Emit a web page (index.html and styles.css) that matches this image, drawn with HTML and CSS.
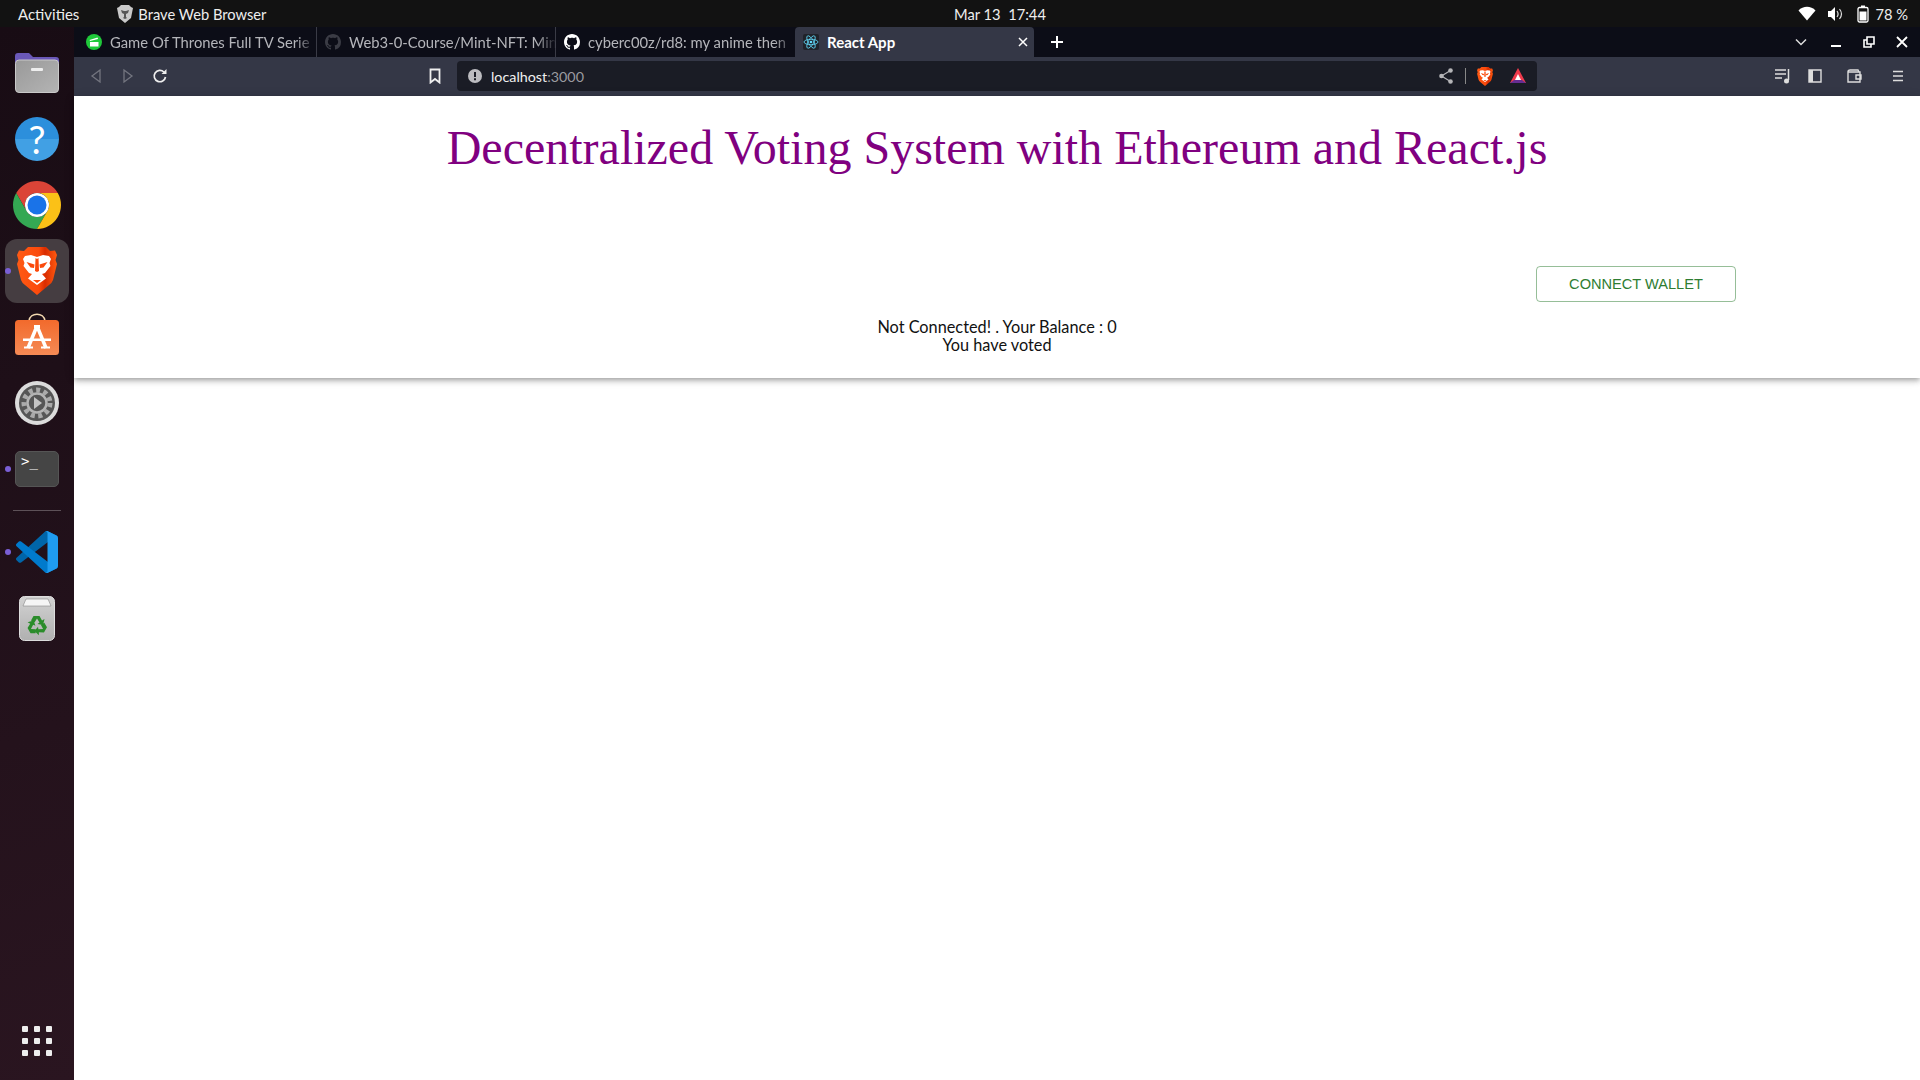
FILE: index.html
```html
<!DOCTYPE html>
<html lang="en">

<head>
    <meta charset="UTF-8">
    <title>React App</title>
    <link rel="stylesheet" href="styles.css">
</head>

<body>
    <svg class="defs" width="0" height="0">
        <defs>
            <linearGradient id="brave-fill" x1="0" x2="1" y1="0" y2="0">
                <stop offset="0" stop-color="#ff5a14" />
                <stop offset=".55" stop-color="#fb4a0c" />
                <stop offset=".7" stop-color="#d92c00" />
                <stop offset="1" stop-color="#ff5a10" />
            </linearGradient>
            <linearGradient id="folder-fill" x1="0" x2="1" y1="0" y2="1">
                <stop offset="0" stop-color="#999" />
                <stop offset="1" stop-color="#b4b4b4" />
            </linearGradient>
            <linearGradient id="bag-fill" x1="0" x2="0" y1="0" y2="1">
                <stop offset="0" stop-color="#f26a2c" />
                <stop offset="1" stop-color="#f58a55" />
            </linearGradient>
            <linearGradient id="trash-fill" x1="0" x2="0" y1="0" y2="1">
                <stop offset="0" stop-color="#d2d2d2" />
                <stop offset="1" stop-color="#b0b0b0" />
            </linearGradient>
            <symbol id="brave" viewBox="0 0 40 48">
                <path fill="url(#brave-fill)" d="M11 0H29L33 4 38 3.500 40 8 38.500 13 40 17 36 33Q35 36 32 38L20 48 8 38Q5 36 4 33L0 17 1.500 13 0 8 2 3.500 7 4Z" />
                <path fill="#fff" d="M8 9L14 8 20 10 26 8 32 9 34 12 32.500 16 33.500 19 28 26 25 27 29 31.500 20 38 11 31.500 15 27 12 26 6.500 19 7.500 16 6 12Z" />
                <path fill="#fb4a0c" d="M9.500 15L17.500 17.500 17 21 13.500 20.500ZM30.500 15L22.500 17.500 23 21 26.500 20.500ZM18.500 11L20 12 21.500 11 22 24 20 25 18 24ZM16 33H24L20 36Z" />
            </symbol>
            <symbol id="github" viewBox="0 0 16 16">
                <path fill="currentColor" d="M8 0C3.580 0 0 3.580 0 8c0 3.540 2.290 6.530 5.470 7.590.4.07.55-.17.55-.38 0-.19-.01-.82-.01-1.490-2.010.37-2.530-.49-2.690-.94-.09-.23-.48-.94-.82-1.130-.28-.15-.68-.52-.01-.53.63-.01 1.080.58 1.230.82.72 1.210 1.870.87 2.330.66.07-.52.28-.87.51-1.070-1.780-.2-3.640-.89-3.640-3.950 0-.87.31-1.590.82-2.150-.08-.2-.36-1.020.08-2.120 0 0 .67-.21 2.200.82.64-.18 1.320-.27 2-.27.68 0 1.360.09 2 .27 1.530-1.040 2.200-.82 2.200-.82.44 1.100.16 1.920.08 2.120.51.56.82 1.270.82 2.150 0 3.070-1.870 3.750-3.650 3.950.29.25.54.73.54 1.480 0 1.070-.01 1.930-.01 2.200 0 .21.15.46.55.38A8.013 8.013 0 0016 8c0-4.420-3.580-8-8-8z" />
            </symbol>
        </defs>
    </svg>

    <!-- barra do sistema -->
    <div class="topbar">
        <div class="topbar-left">
            <span class="activities">Activities</span>
            <span class="app-name">
                <svg width="16" height="18" viewBox="0 0 16 18"><path fill="#c9c9c9" d="M4 0h8l2 2 2 1-1 5-1 5-6 5-6-5-1-5-1-5 2-1z" /><path fill="#555" d="M4 5l3 1h2l3-1-1 3-2 1v3l1 1-2 1-2-1 1-1V9L5 8z" /></svg>
                Brave Web Browser
            </span>
        </div>
        <div class="clock">Mar 13&nbsp; 17:44</div>
        <div class="topbar-right">
            <svg width="18" height="16" viewBox="0 0 18 16"><path fill="#fff" d="M9 14.500L.5 4.500C5-.5 13-.5 17.500 4.500z" /></svg>
            <svg class="tray-volume" width="16" height="16" viewBox="0 0 16 16"><path fill="#fff" d="M1 5h3l4-4v14l-4-4H1z" /><path fill="none" stroke="#ddd" stroke-width="1.200" d="M10 5c1.300 1.800 1.300 4.200 0 6M12.500 3c2.400 3 2.400 7 0 10" /></svg>
            <svg class="tray-battery" width="12" height="18" viewBox="0 0 12 18"><path fill="none" stroke="#fff" stroke-width="1.300" d="M2.500 2.500h7a1.500 1.500 0 011.500 1.500v11.500a1.500 1.500 0 01-1.500 1.500h-7A1.500 1.500 0 011 15.500V4a1.500 1.500 0 011.500-1.500z" /><path fill="#fff" d="M4 .5h4v2H4zM2.500 6.500h7v9h-7z" /></svg>
            <span class="battery">78 %</span>
        </div>
    </div>

    <div class="desktop">
        <!-- dock lateral -->
        <aside class="dock">
            <div class="dock-item">
                <svg width="44" height="40" viewBox="0 0 44 40">
                    <path fill="#6a58b8" d="M3 0h11l4 4h23a3 3 0 013 3v10H0V3a3 3 0 013-3z" />
                    <rect x=".5" y="7" width="43" height="32.500" rx="3.500" fill="url(#folder-fill)" stroke="#c9c9c9" />
                    <rect x="16" y="15" width="12" height="3" rx="1" fill="#eee" />
                </svg>
            </div>
            <div class="dock-item">
                <div class="help-icon">?</div>
            </div>
            <div class="dock-item">
                <svg width="48" height="48" viewBox="0 0 48 48">
                    <path fill="#db4437" d="M44.780 12A24 24 0 003.220 12L13.600 30A12 12 0 0124 12z" />
                    <path fill="#34a853" d="M3.220 12A24 24 0 0024 48L34.400 30A12 12 0 0113.600 30z" />
                    <path fill="#fbc117" d="M24 48A24 24 0 0044.780 12H24A12 12 0 0134.400 30z" />
                    <circle cx="24" cy="24" r="12" fill="#fff" />
                    <circle cx="24" cy="24" r="9.500" fill="#1a73e8" />
                </svg>
            </div>
            <div class="dock-item is-active">
                <span class="dot"></span>
                <div class="dock-highlight">
                    <svg width="40" height="48"><use href="#brave" /></svg>
                </div>
            </div>
            <div class="dock-item">
                <svg class="bag-icon" width="44" height="42" viewBox="0 0 44 42">
                    <path fill="none" stroke="#f3d9b0" stroke-width="1.600" d="M14 8c1-9 15-9 16 0" />
                    <rect y="7" width="44" height="35" rx="3.500" fill="url(#bag-fill)" />
                    <path fill="none" stroke="#fff" stroke-width="3.500" d="M22 13L13 35M22 13l9 22" />
                    <path fill="#fff" d="M19 12h6v3h-6zM8 25.500h28v2.500H8zM9 33.500h9v2H9zM26 33.500h9v2h-9z" />
                </svg>
            </div>
            <div class="dock-item">
                <svg width="44" height="44" viewBox="0 0 44 44">
                    <circle cx="22" cy="22" r="22" fill="#dcdcdc" />
                    <circle cx="22" cy="22" r="18" fill="#565656" />
                    <circle cx="22" cy="22" r="13" fill="none" stroke="#aaa" stroke-width="5" stroke-dasharray="4 3.500" />
                    <circle cx="22" cy="22" r="9.500" fill="none" stroke="#b4b4b4" stroke-width="2.500" />
                    <path fill="#c4c4c4" d="M19 16l8 6-8 6z" />
                </svg>
            </div>
            <div class="dock-item">
                <span class="dot"></span>
                <div class="terminal-icon"><span>&gt;_</span></div>
            </div>
            <div class="dock-sep"></div>
            <div class="dock-item">
                <span class="dot"></span>
                <svg width="42" height="42" viewBox="0 0 100 100">
                    <path fill="#0065a9" d="M96.460 10.800L75.860.880C73.470-.270 70.620.210 68.750 2.080L1.300 63.580c-1.810 1.650-1.810 4.510 0 6.170l5.510 5c1.490 1.350 3.720 1.450 5.320.240L93.360 13.370c2.730-2.070 6.640-.120 6.640 3.300v-.240c0-2.400-1.380-4.590-3.540-5.630z" />
                    <path fill="#007acc" d="M96.460 89.200L75.860 99.120c-2.390 1.150-5.240.670-7.110-1.200L1.300 36.420c-1.810-1.660-1.810-4.510 0-6.170l5.510-5c1.490-1.350 3.720-1.450 5.320-.240l81.230 61.620c2.730 2.070 6.640.120 6.640-3.300v.240c0 2.400-1.380 4.590-3.540 5.630z" />
                    <path fill="#1f9cf0" d="M75.860 99.130c-2.390 1.150-5.240.660-7.110-1.210 2.310 2.310 6.250.670 6.250-2.590V4.670c0-3.260-3.940-4.890-6.250-2.590C70.620.210 73.470-.270 75.860.870l20.600 9.910c2.160 1.040 3.540 3.230 3.540 5.630v67.180c0 2.400-1.380 4.590-3.540 5.630z" />
                </svg>
            </div>
            <div class="dock-item">
                <svg width="36" height="45" viewBox="0 0 36 45">
                    <rect x=".5" y=".5" width="35" height="44" rx="5" fill="url(#trash-fill)" stroke="#ddd" />
                    <path fill="#f5f5f5" stroke="#888" stroke-width=".6" d="M7 3h22l3 7H4z" />
                    <g fill="#2a8c2a">
                        <path d="M14.500 20H20.500L23 24.500 25.500 23 24 29 18.500 28 20.500 26.500 18 22.500 15.500 26.500 12 24.500Z" />
                        <path d="M14.500 20H20.500L23 24.500 25.500 23 24 29 18.500 28 20.500 26.500 18 22.500 15.500 26.500 12 24.500Z" transform="rotate(120 18 29.500)" />
                        <path d="M14.500 20H20.500L23 24.500 25.500 23 24 29 18.500 28 20.500 26.500 18 22.500 15.500 26.500 12 24.500Z" transform="rotate(240 18 29.500)" />
                    </g>
                </svg>
            </div>
            <div class="app-grid">
                <i></i><i></i><i></i>
                <i></i><i></i><i></i>
                <i></i><i></i><i></i>
            </div>
        </aside>

        <div class="browser">
            <!-- abas -->
            <div class="tabstrip">
                <div class="tab">
                    <svg class="favicon" width="16" height="16" viewBox="0 0 16 16"><circle cx="8" cy="8" r="8" fill="#1fc93a" /><path fill="#fff" d="M3.500 6l8-2.500.6 1.500-8 2zM4 8h8.500v4.500H4z" /></svg>
                    <span class="tab-title">Game Of Thrones Full TV Serie</span>
                </div>
                <div class="tab">
                    <svg class="favicon dim" width="16" height="16"><use href="#github" /></svg>
                    <span class="tab-title">Web3-0-Course/Mint-NFT: Min</span>
                </div>
                <div class="tab no-sep">
                    <svg class="favicon" width="16" height="16"><use href="#github" /></svg>
                    <span class="tab-title">cyberc00z/rd8: my anime then</span>
                </div>
                <div class="tab active">
                    <svg class="favicon" width="16" height="16" viewBox="0 0 16 16">
                        <rect width="16" height="16" rx="2" fill="#20232a" />
                        <g fill="none" stroke="#61dafb" stroke-width=".8">
                            <ellipse cx="8" cy="8" rx="7" ry="2.700" />
                            <ellipse cx="8" cy="8" rx="7" ry="2.700" transform="rotate(60 8 8)" />
                            <ellipse cx="8" cy="8" rx="7" ry="2.700" transform="rotate(120 8 8)" />
                        </g>
                        <circle cx="8" cy="8" r="1.300" fill="#61dafb" />
                    </svg>
                    <span class="tab-title">React App</span>
                    <svg class="tab-close" width="10" height="10" viewBox="0 0 10 10"><path stroke="#fff" stroke-width="1.500" d="M1 1l8 8M9 1l-8 8" /></svg>
                </div>
                <svg class="new-tab" width="12" height="12" viewBox="0 0 12 12"><path stroke="#fff" stroke-width="2" d="M6 0v12M0 6h12" /></svg>
                <div class="window-controls">
                    <svg class="win-list" width="12" height="8" viewBox="0 0 12 8"><path fill="none" stroke="#ddd" stroke-width="1.500" d="M1 1.500l5 5 5-5" /></svg>
                    <svg width="12" height="12" viewBox="0 0 12 12"><path stroke="#fff" stroke-width="2" d="M1 10h10" /></svg>
                    <svg width="12" height="12" viewBox="0 0 12 12"><path fill="none" stroke="#fff" stroke-width="1.600" d="M4 1h7v7H4zM4 4H1v7h7V8" /></svg>
                    <svg width="12" height="12" viewBox="0 0 12 12"><path stroke="#fff" stroke-width="1.800" d="M1 1l10 10M11 1L1 11" /></svg>
                </div>
            </div>

            <!-- barra de endereco -->
            <div class="toolbar">
                <div class="nav-buttons">
                    <svg width="12" height="16" viewBox="0 0 12 16"><path fill="none" stroke="#73757f" stroke-width="1.300" d="M10 2v12L2 8z" /></svg>
                    <svg width="12" height="16" viewBox="0 0 12 16"><path fill="none" stroke="#73757f" stroke-width="1.300" d="M2 2v12l8-6z" /></svg>
                    <svg class="reload" width="16" height="16" viewBox="0 0 16 16"><path fill="none" stroke="#eee" stroke-width="1.700" d="M13.500 9a5.700 5.700 0 11-1.600-5" /><path fill="#eee" d="M14.500 1v5h-5z" /></svg>
                </div>
                <svg class="bookmark" width="12" height="16" viewBox="0 0 12 16"><path fill="none" stroke="#eee" stroke-width="1.800" d="M1.500 1.500h9v13L6 11l-4.500 3.500z" /></svg>
                <div class="address-bar">
                    <svg width="14" height="14" viewBox="0 0 14 14"><circle cx="7" cy="7" r="7" fill="#bcbcc0" /><path fill="#1a1c25" d="M6 3h2v5H6zM6 9.300h2v2H6z" /></svg>
                    <span class="url">localhost<span class="url-port">:3000</span></span>
                    <svg class="share" width="14" height="16" viewBox="0 0 14 16"><g fill="#b5b5b8"><circle cx="11.500" cy="2.500" r="2.300" /><circle cx="2.500" cy="8" r="2.300" /><circle cx="11.500" cy="13.500" r="2.300" /></g><path fill="none" stroke="#b5b5b8" stroke-width="1.200" d="M11.500 2.500L2.500 8l9 5.500" /></svg>
                    <span class="addr-sep"></span>
                    <svg class="addr-brave" width="16" height="19"><use href="#brave" /></svg>
                    <svg class="addr-bat" width="18" height="18" viewBox="0 0 18 18"><path fill="#ef3a4c" d="M9 1L17 16H1z" /><path fill="#662d91" d="M1 16l4-3h8l4 3z" /><path fill="#fff" d="M9 7l3 6H6z" /></svg>
                </div>
                <div class="toolbar-actions">
                    <svg width="16" height="16" viewBox="0 0 16 16"><path fill="none" stroke="#ddd" stroke-width="1.500" d="M0 2h11M0 6h11M0 10h7M13.500 1v11" /><circle cx="11.500" cy="13" r="2.500" fill="#ddd" /></svg>
                    <svg class="act-sidebar" width="14" height="14" viewBox="0 0 14 14"><path fill="none" stroke="#ddd" stroke-width="1.400" d="M1 1h12v12H1z" /><path fill="#ddd" d="M1 1h4v12H1z" /></svg>
                    <svg class="act-wallet" width="16" height="14" viewBox="0 0 16 14"><path fill="none" stroke="#ddd" stroke-width="1.400" d="M2 3V2.500C2 1.500 3 1 4 1h8l1 2M2 3h12v10H2zM15 6h-5v4h5z" /></svg>
                    <svg class="act-menu" width="12" height="12" viewBox="0 0 12 12"><path stroke="#ddd" stroke-width="1.600" d="M1 1.500h10M1 6h10M1 10.500h10" /></svg>
                </div>
            </div>

            <!-- pagina -->
            <main class="page">
                <header class="app-header">
                    <h1>Decentralized Voting System with Ethereum and React.js</h1>
                    <div class="wallet-row">
                        <button class="connect-btn">CONNECT WALLET</button>
                    </div>
                    <p class="status">Not Connected! . Your Balance : 0</p>
                    <p class="status">You have voted</p>
                </header>
            </main>
        </div>
    </div>
</body>

</html>
```

FILE: styles.css
```css
* {
    box-sizing: border-box;
}

body {
    margin: 0;
    height: 100vh;
    display: flex;
    flex-direction: column;
    overflow: hidden;
    font-family: "Lato", "Noto Sans", sans-serif;
    background-color: #fff;
}

.defs {
    position: absolute;
}

svg {
    display: block;
    flex: none;
}

.topbar {
    height: 27px;
    background-color: #121212;
    color: #eee;
    font-size: 14.7px;
    display: grid;
    grid-template-columns: 1fr auto 1fr;
    align-items: center;
    padding: 0 12px 0 18px;
}

.topbar-left {
    display: flex;
    align-items: center;
    gap: 38px;
}

.activities {
    font-size: 15px;
}

.app-name {
    display: flex;
    align-items: center;
    gap: 5px;
}

.topbar-right {
    display: flex;
    align-items: center;
    justify-content: flex-end;
}

.tray-volume {
    margin-left: 11px;
}

.tray-battery {
    margin-left: 14px;
}

.battery {
    margin-left: 6px;
}

.clock {
    margin-left: 74px;
}

.desktop {
    flex: 1;
    display: flex;
    min-height: 0;
}

.dock {
    width: 74px;
    flex: none;
    padding-top: 13px;
    display: flex;
    flex-direction: column;
    background: linear-gradient(160deg, #180c14, #2a1520);
}

.dock-item {
    position: relative;
    height: 66px;
    flex: none;
    display: flex;
    align-items: center;
    justify-content: center;
}

.dock-highlight {
    width: 64px;
    height: 64px;
    border-radius: 12px;
    background-color: #453d41;
    display: flex;
    align-items: center;
    justify-content: center;
}

.bag-icon {
    margin-bottom: 6px;
}

.dot {
    position: absolute;
    left: 5px;
    top: 30px;
    width: 6px;
    height: 6px;
    border-radius: 50%;
    background-color: #7a5fd6;
}

.help-icon {
    width: 44px;
    height: 44px;
    border-radius: 50%;
    background: linear-gradient(#2c8fdc 50%, #41a0e4 50%);
    color: #fff;
    font-size: 38px;
    line-height: 44px;
    text-align: center;
}

.terminal-icon {
    width: 44px;
    height: 36px;
    border-radius: 5px;
    background-color: #454545;
    border: 1px solid #555;
    color: #fff;
    font-family: "DejaVu Sans Mono", monospace;
    font-size: 14px;
    line-height: 14px;
    padding: 2px 5px;
}

.dock-sep {
    height: 1px;
    width: 48px;
    margin: 8px auto;
    background-color: #5d5158;
}

.app-grid {
    margin: auto auto 24px;
    display: grid;
    grid-template-columns: repeat(3, 6px);
    gap: 6px;
}

.app-grid i {
    height: 6px;
    border-radius: 1px;
    background-color: #eee;
}

.browser {
    flex: 1;
    min-width: 0;
    display: flex;
    flex-direction: column;
}

.tabstrip {
    height: 30px;
    padding-left: 4px;
    display: flex;
    align-items: center;
    background-color: #0c0d17;
}

.tab {
    width: 239px;
    height: 30px;
    flex: none;
    padding: 0 0 0 8px;
    display: flex;
    align-items: center;
    gap: 8px;
    color: #b4b5ba;
    font-size: 14.8px;
    border-right: 1px solid #3a3b46;
}

.tab.no-sep {
    border-right: none;
}

.tab.active {
    color: #fff;
    font-weight: bold;
    font-size: 15px;
    background-color: #343746;
    border-right: none;
    border-radius: 4px 4px 0 0;
}

.tab-title {
    flex: 1;
    white-space: nowrap;
    -webkit-mask-image: linear-gradient(to right, #000 90%, transparent);
    mask-image: linear-gradient(to right, #000 90%, transparent);
}

.tab.active .tab-title {
    -webkit-mask-image: none;
    mask-image: none;
}

.favicon {
    color: #fff;
}

.favicon.dim {
    color: #3b3c45;
}

.tab-close {
    margin-right: 6px;
}

.new-tab {
    margin-left: 17px;
}

.window-controls {
    margin-left: auto;
    padding-right: 12px;
    display: flex;
    align-items: center;
    gap: 21px;
}

.win-list {
    margin-right: 2px;
}

.toolbar {
    height: 39px;
    padding: 4px 0 5px 16px;
    display: flex;
    align-items: center;
    background-color: #343746;
}

.nav-buttons {
    display: flex;
    align-items: center;
    gap: 20px;
}

.reload {
    margin-left: -2px;
}

.bookmark {
    margin-left: 261px;
}

.address-bar {
    width: 1080px;
    height: 30px;
    margin-left: 16px;
    padding: 0 10px 0 11px;
    border-radius: 4px;
    display: flex;
    align-items: center;
    background-color: #1a1c25;
}

.url {
    margin-left: 9px;
    color: #f0f0f0;
    font-size: 14.3px;
}

.url-port {
    color: #9a9ba0;
}

.share {
    margin-left: auto;
}

.addr-sep {
    width: 1px;
    height: 16px;
    margin: 0 11px 0 12px;
    background-color: #888;
}

.addr-bat {
    margin-left: 16px;
}

.toolbar-actions {
    flex: 1;
    padding-left: 238px;
    display: flex;
    align-items: center;
}

.act-sidebar {
    margin-left: 17px;
}

.act-wallet {
    margin-left: 24px;
}

.act-menu {
    margin-left: 30px;
}

.page {
    flex: 1;
    background-color: #fff;
}

.app-header {
    height: 282px;
    padding-top: 24px;
    text-align: center;
    box-shadow: 0 2px 4px -1px rgba(0, 0, 0, 0.2), 0 4px 5px 0 rgba(0, 0, 0, 0.14), 0 1px 10px 0 rgba(0, 0, 0, 0.12);
}

h1 {
    margin: 0;
    color: purple;
    font-family: "Liberation Serif", serif;
    font-size: 48px;
    font-weight: normal;
    line-height: 55px;
}

.wallet-row {
    margin-top: 91px;
    margin-bottom: 16px;
    padding-right: 184px;
    display: flex;
    justify-content: flex-end;
}

.connect-btn {
    width: 200px;
    height: 36px;
    padding-bottom: 2px;
    border: 1px solid rgba(46, 125, 50, 0.5);
    border-radius: 4px;
    background-color: transparent;
    color: #2e7d32;
    font-family: "Liberation Sans", sans-serif;
    font-size: 14.6px;
}

.status {
    margin: 0;
    color: #111;
    font-size: 16.3px;
    line-height: 18px;
}
```
